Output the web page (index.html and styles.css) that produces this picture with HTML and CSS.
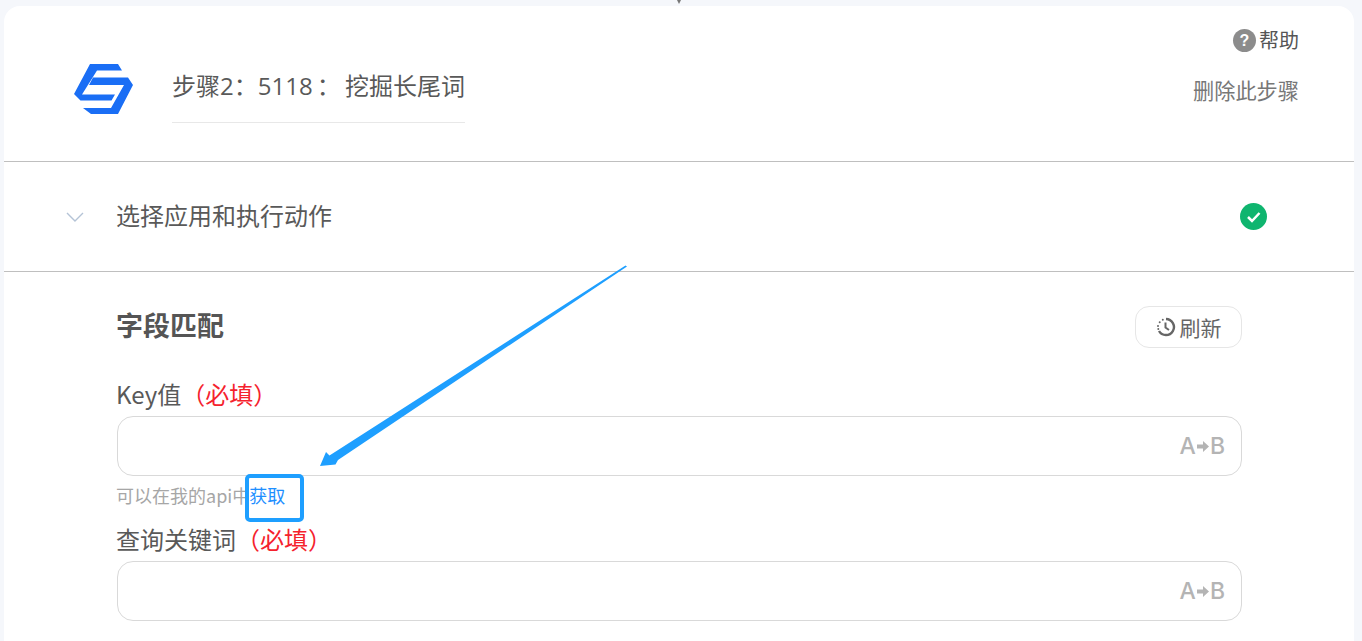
FILE: index.html
```html
<!DOCTYPE html>
<html lang="zh-CN">
<head>
<meta charset="utf-8">
<title>步骤2</title>
<link rel="stylesheet" href="styles.css">
</head>
<body>
<span class="connector"></span>
<main class="card">
  <header class="head">
    <svg class="logo" viewBox="0 0 62 52" aria-hidden="true">
      <path d="M17 1H45L49 7.500H24L9 31.500H42L38.500 37.500H7.500L1 31Z"/>
      <path d="M20 14.500H55L60 22L45 51H18L10 45H38L51 22H16Z"/>
    </svg>
    <div class="title-wrap"><h1 class="title">步骤2：5118 ： 挖掘长尾词</h1></div>
    <div class="head-side">
      <div class="help"><span class="help-dot">?</span>帮助</div>
      <div class="delete">删除此步骤</div>
    </div>
  </header>
  <section class="step">
    <svg class="chevron" viewBox="0 0 18 10" aria-hidden="true"><path d="M1 1L9 9L17 1"/></svg>
    <span class="step-name">选择应用和执行动作</span>
    <svg class="check" viewBox="0 0 27 27" aria-hidden="true"><circle cx="13.500" cy="13.500" r="13.500"/><path d="M8 14L12 18L19.500 10"/></svg>
  </section>
  <section class="fields">
    <div class="fields-top">
      <h2 class="fields-title">字段匹配</h2>
      <button class="refresh" type="button">
        <svg class="clock" viewBox="0 0 20 20" aria-hidden="true"><path class="clock-arc" d="M10 2A8 8 0 1 1 3 14"/><path class="clock-dots" d="M6.800 2.700L6.800 2.700M3.700 5.200L3.700 5.200M2 9L2 9M2.300 12L2.300 12"/><path class="clock-hand" d="M9.500 5.500V10.500L13 13"/></svg>
        刷新
      </button>
    </div>
    <label class="label">Key值<em class="req">（必填）</em></label>
    <div class="input"><span class="ab">A<svg class="ab-arrow" viewBox="0 0 12 11" aria-hidden="true"><path d="M0 3.500H6V0L12 5.500L6 11V7.500H0Z"/></svg>B</span></div>
    <p class="hint">可以在我的api中<a class="link">获取</a></p>
    <label class="label second">查询关键词<em class="req">（必填）</em></label>
    <div class="input"><span class="ab">A<svg class="ab-arrow" viewBox="0 0 12 11" aria-hidden="true"><path d="M0 3.500H6V0L12 5.500L6 11V7.500H0Z"/></svg>B</span></div>
  </section>
</main>
<svg class="arrow" viewBox="0 0 1362 641" aria-hidden="true">
  <path d="M625.500 265.500L627 266.500L338 460L335.500 464.500L320 466L326 452L329.500 455.500Z"/>
</svg>
<div class="mark"></div>
</body>
</html>
```
FILE: styles.css
```css
* { box-sizing: border-box; }
html, body { height: 100%; }
body {
  margin: 0;
  height: 641px;
  overflow: hidden;
  position: relative;
  background: #f5f7fb;
  padding: 6px 8px 0 4px;
  font-family: "Noto Sans CJK SC", "Noto Sans", sans-serif;
  color: #595959;
}
.connector {
  position: absolute;
  left: 677px;
  top: 0;
  border-left: 2.500px solid transparent;
  border-right: 2.500px solid transparent;
  border-top: 4px solid #777;
}
.card {
  background: #fff;
  border-radius: 16px 16px 0 0;
  height: 635px;
  overflow: hidden;
}
.head {
  height: 156px;
  border-bottom: 1px solid #bfbfbf;
  display: flex;
  align-items: flex-start;
  padding: 57px 55px 0 69px;
}
.logo { width: 62px; height: 52px; fill: #1a6ef5; flex: none; }
.title-wrap {
  margin-left: 37px;
  width: 293px;
  height: 60px;
  border-bottom: 1px solid #e8e8e8;
}
.title {
  margin: 0;
  font-family: "Open Sans", "Noto Sans CJK SC", sans-serif;
  font-size: 24px;
  font-weight: 400;
  line-height: 46px;
  word-spacing: -2px;
  white-space: nowrap;
}
.head-side {
  margin-left: auto;
  margin-top: -37px;
  display: flex;
  flex-direction: column;
  align-items: flex-end;
  gap: 20px;
}
.help {
  display: flex;
  align-items: center;
  gap: 3px;
  font-size: 20px;
  line-height: 28px;
  color: #555;
}
.help-dot {
  width: 23px;
  height: 23px;
  border-radius: 50%;
  background: #8c8c8c;
  color: #fff;
  font: 700 16px/23px "Liberation Sans", sans-serif;
  text-align: center;
}
.delete { font-size: 21.200px; line-height: 32px; color: #777; }
.step {
  height: 110px;
  border-bottom: 1px solid #bfbfbf;
  display: flex;
  align-items: center;
  padding: 0 87px 0 62px;
}
.chevron { width: 18px; height: 10px; fill: none; stroke: #b4c3d6; stroke-width: 1.400; flex: none; }
.step-name { margin-left: 32px; margin-bottom: 3px; font-size: 24px; line-height: 36px; }
.check { margin-left: auto; width: 27px; height: 27px; flex: none; }
.check circle { fill: #0fb56f; }
.check path { fill: none; stroke: #fff; stroke-width: 2.500; }
.fields { padding: 34px 112px 0 113px; }
.fields-top { display: flex; align-items: center; justify-content: space-between; height: 42px; }
.fields-title { margin: 0 0 4px -1px; font-size: 27px; font-weight: 700; line-height: 38px; color: #555; }
.refresh {
  width: 107px;
  height: 42px;
  border: 1px solid #e6e6e6;
  border-radius: 14px;
  background: #fff;
  color: #666;
  display: flex;
  align-items: center;
  justify-content: center;
  gap: 4px;
  padding: 0;
  font: 400 21px/30px "Noto Sans CJK SC", sans-serif;
}
.clock { width: 20px; height: 20px; fill: none; stroke: #666; flex: none; }
.clock-arc { stroke-width: 2.400; }
.clock-dots { stroke-width: 2; stroke-linecap: round; }
.clock-hand { stroke-width: 2; }
.label { display: block; margin: 31px 0 0 -1px; font-size: 24px; line-height: 30px; }
.label.second { margin-top: 17px; }
.req { font-style: normal; color: #f5222d; }
.input {
  margin-top: 7px;
  height: 60px;
  border: 1px solid #d9d9d9;
  border-radius: 16px;
  display: flex;
  align-items: center;
  justify-content: flex-end;
  padding-right: 16px;
}
.ab {
  display: flex;
  align-items: center;
  gap: 1px;
  font: 500 23px/30px "Inter", sans-serif;
  color: #b4b4b4;
}
.ab-arrow { width: 12px; height: 11px; fill: #b4b4b4; }
.hint { margin: 7px 0 0 -1px; font-size: 18px; line-height: 24px; color: #a6a6a6; }
.link { color: #1e8fff; margin-left: -1px; }
.arrow { position: absolute; left: 0; top: 0; width: 1362px; height: 641px; fill: #1e9fff; pointer-events: none; }
.mark {
  position: absolute;
  left: 245px;
  top: 474px;
  width: 59px;
  height: 48px;
  border: 4px solid #1e9fff;
  border-radius: 5px;
  pointer-events: none;
}
```
